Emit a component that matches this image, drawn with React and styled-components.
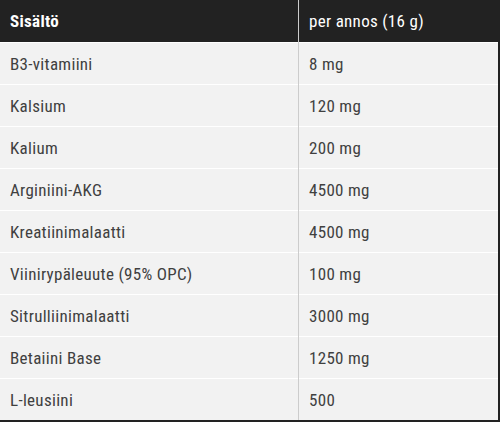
import React from "react";
import styled, { createGlobalStyle } from "styled-components";

const Global = createGlobalStyle`
  html, body { margin: 0; padding: 0; background: #fff; }
  body { font-family: "Roboto Condensed", Roboto, "Liberation Sans", sans-serif; }
`;

const Table = styled.table`
  width: 500px;
  border-collapse: collapse;
  border-right: 2px solid #222;
  border-bottom: 2px solid #222;
  font-family: "Roboto Condensed", Roboto, sans-serif;
  font-stretch: condensed;
  font-size: 17px;
  letter-spacing: 0.3px;
  color: #404040;
`;

const HeadCell = styled.th`
  background: #222;
  color: #fff;
  text-align: left;
  height: 42px;
  padding: 0 10px;
  font-weight: ${(p) => (p.$bold ? 700 : 400)};
  border-left: ${(p) => (p.$divider ? "1px solid #ccc" : "none")};
  width: ${(p) => (p.$divider ? "auto" : "278px")};
`;

const Row = styled.tr`
  background: #f2f2f2;
  border-top: 1px solid #fff;
`;

const Cell = styled.td`
  height: 41px;
  padding: 0 10px;
  border-left: ${(p) => (p.$divider ? "1px solid #ccc" : "none")};
`;

const rows = [
  ["B3-vitamiini", "8 mg"],
  ["Kalsium", "120 mg"],
  ["Kalium", "200 mg"],
  ["Arginiini-AKG", "4500 mg"],
  ["Kreatiinimalaatti", "4500 mg"],
  ["Viinirypäleuute (95% OPC)", "100 mg"],
  ["Sitrulliinimalaatti", "3000 mg"],
  ["Betaiini Base", "1250 mg"],
  ["L-leusiini", "500"],
];

export default function App() {
  return (
    <>
      <Global />
      <Table>
        <thead>
          <tr>
            <HeadCell $bold>Sisältö</HeadCell>
            <HeadCell $divider>per annos (16 g)</HeadCell>
          </tr>
        </thead>
        <tbody>
          {rows.map(([a, b]) => (
            <Row key={a}>
              <Cell>{a}</Cell>
              <Cell $divider>{b}</Cell>
            </Row>
          ))}
        </tbody>
      </Table>
    </>
  );
}
